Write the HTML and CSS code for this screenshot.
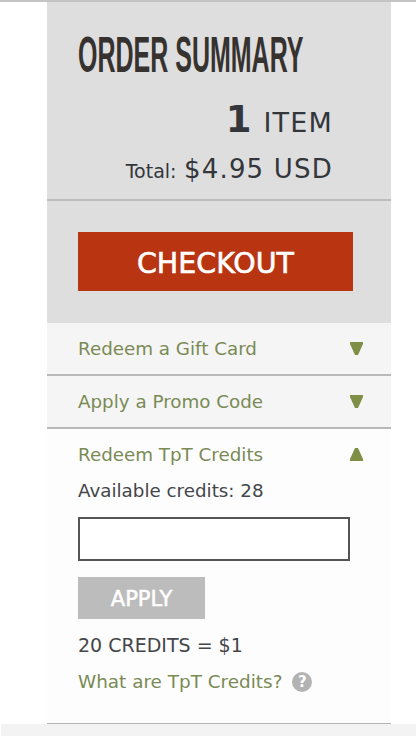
FILE: index.html
```html
<!DOCTYPE html>
<html lang="en">
<head>
    <meta charset="UTF-8">
    <meta name="viewport" content="width=device-width, initial-scale=1.0">
    <title>Order Summary</title>
    <link rel="stylesheet" href="styles.css">
</head>
<body>

    <div class="top-rule"></div>

    <div class="panel">
        <div class="summary">
            <h1 class="summary-title">ORDER SUMMARY</h1>
            <div class="summary-count"><b>1</b> ITEM</div>
            <div class="summary-total"><span class="total-label">Total:</span> $4.95 USD</div>
        </div>

        <div class="checkout">
            <button class="checkout-button">CHECKOUT</button>
        </div>

        <div class="row">
            <a class="row-link">Redeem a Gift Card</a>
            <svg class="arrow" viewBox="0 0 13 13"><path d="M0 0H13V2L8 13H5L0 2Z"/></svg>
        </div>
        <div class="row">
            <a class="row-link">Apply a Promo Code</a>
            <svg class="arrow" viewBox="0 0 13 13"><path d="M0 0H13V2L8 13H5L0 2Z"/></svg>
        </div>

        <div class="credits">
            <div class="credits-head">
                <a class="row-link">Redeem TpT Credits</a>
                <svg class="arrow" viewBox="0 0 13 13"><path d="M0 13H13V11L8 0H5L0 11Z"/></svg>
            </div>
            <div class="credits-available">Available credits: 28</div>
            <input class="credits-input" type="text">
            <button class="apply-button">APPLY</button>
            <div class="credits-rate">20 CREDITS = $1</div>
            <div class="credits-help">
                <a class="help-link">What are TpT Credits?</a>
                <span class="help-icon">?</span>
            </div>
        </div>
    </div>

    <div class="page-foot"></div>

</body>
</html>
```

FILE: styles.css
```css
/* Order summary sidebar */
body {
    margin: 0;
    height: 736px;
    overflow: hidden;
    background-color: #fff;
    font-family: "DejaVu Sans", sans-serif;
    display: flex;
    flex-direction: column;
}

.top-rule {
    height: 2px;
    background-color: #c4c4c4;
}

.panel {
    width: 344px;
    height: 721px;
    margin-left: 47px;
    background-color: #fdfdfd;
    border-bottom: 1px solid #b4b4b4;
}

.summary {
    height: 197px;
    padding: 0 58px 0 31px;
    background-color: #dedede;
    border-bottom: 2px solid #bcbcbc;
}

.summary-title {
    margin: 0;
    padding-top: 25px;
    font-family: "Liberation Sans", sans-serif;
    font-size: 50px;
    line-height: 56px;
    font-weight: bold;
    color: #36322f;
    white-space: nowrap;
    transform: scaleX(0.5);
    transform-origin: left;
}

.summary-count {
    margin-top: 19px;
    text-align: right;
    font-size: 27px;
    line-height: 36px;
    letter-spacing: 1.2px;
    color: #33363a;
}

.summary-count b {
    font-size: 37px;
    margin-right: 1px;
}

.summary-total {
    margin-top: 12px;
    text-align: right;
    font-size: 26px;
    line-height: 32px;
    letter-spacing: 1.2px;
    white-space: nowrap;
    color: #33363a;
}

.total-label {
    font-size: 19px;
    letter-spacing: 0;
    margin-right: -2px;
}

.checkout {
    height: 122px;
    padding: 31px 0 0 31px;
    box-sizing: border-box;
    background-color: #dedede;
}

.checkout-button {
    display: block;
    width: 275px;
    height: 59px;
    padding: 3px 0 0;
    border: none;
    background-color: #b93512;
    color: #fff;
    font-family: "DejaVu Sans", sans-serif;
    font-size: 28.5px;
    -webkit-text-stroke: 0.6px #fff;
}

.row {
    height: 51px;
    padding: 0 28px 0 31px;
    display: flex;
    justify-content: space-between;
    align-items: center;
    background-color: #f5f5f5;
    border-bottom: 2px solid #b9b9b9;
}

.row-link {
    font-size: 18.3px;
    color: #7a8a55;
}

.arrow {
    width: 13px;
    height: 13px;
    fill: #7f8f45;
}

.credits {
    padding: 0 28px 0 31px;
}

.credits-head {
    height: 51px;
    display: flex;
    justify-content: space-between;
    align-items: center;
}

.credits-available {
    font-size: 18.3px;
    line-height: 22px;
    color: #44464a;
}

.credits-input {
    display: block;
    box-sizing: border-box;
    width: 272px;
    height: 44px;
    margin-top: 15px;
    border: 2px solid #555;
    background-color: #fff;
}

.apply-button {
    display: block;
    width: 127px;
    height: 42px;
    margin-top: 16px;
    padding: 2px 0 0;
    border: none;
    background-color: #bcbcbc;
    color: #fff;
    font-family: "DejaVu Sans", sans-serif;
    font-size: 21px;
    -webkit-text-stroke: 0.5px #fff;
}

.credits-rate {
    margin-top: 15px;
    font-size: 19px;
    line-height: 22px;
    color: #44464a;
}

.credits-help {
    margin-top: 15px;
    display: flex;
    align-items: center;
    gap: 10px;
}

.help-link {
    font-size: 18.4px;
    line-height: 22px;
    color: #7a8a55;
}

.help-icon {
    width: 20px;
    height: 20px;
    border-radius: 50%;
    background-color: #b3b3b3;
    color: #fff;
    font-size: 15px;
    font-weight: bold;
    line-height: 20px;
    text-align: center;
}

.page-foot {
    flex: 1;
    margin-left: 1px;
    background-color: #f3f3f3;
}
```
